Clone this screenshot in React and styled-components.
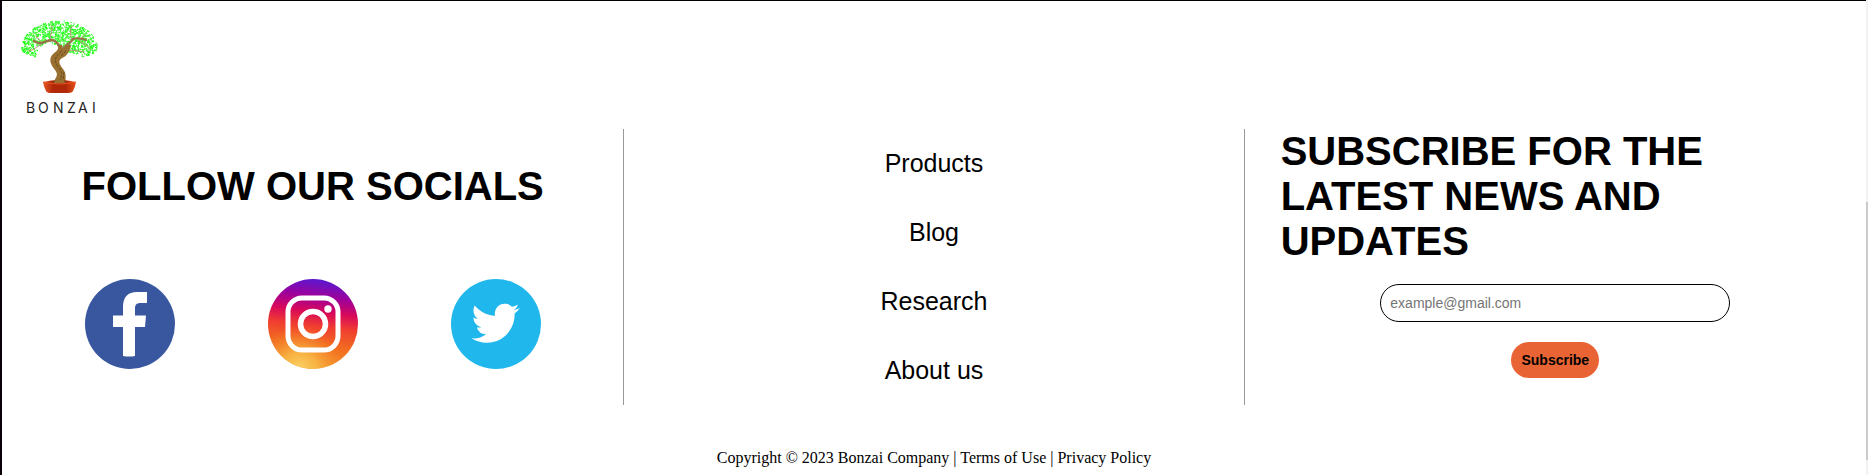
import React from "react";
import styled, { createGlobalStyle } from "styled-components";

const GlobalStyle = createGlobalStyle`
  * { box-sizing: border-box; }
  body { margin: 0; background: #fff; color: #000; }
`;

const Page = styled.div`
  display: flex;
  min-height: 100vh;
`;

const Footer = styled.footer`
  flex: 1;
  border-top: 1px solid #000;
  border-left: 2px solid #0c0008;
`;

const ScrollTrack = styled.div`
  width: 2px;
  padding: 202px 0 15px;
  display: flex;
  background: #f1f1f1;
`;

const ScrollThumb = styled.div`
  flex: 1;
  background: #cbcbcb;
`;

const LogoLink = styled.a`
  display: block;
  width: 100px;
  height: 128px;
  svg { display: block; }
`;

const Columns = styled.div`
  display: grid;
  grid-template-columns: repeat(3, minmax(0, 1fr));
  font-family: Arial, "Liberation Sans", sans-serif;
`;

const Column = styled.section`
  display: flex;
  flex-direction: column;
  align-items: center;
  border: solid #999;
  border-width: ${(p) => (p.$ruled ? "0 1px" : "0")};
  padding: ${(p) => p.$padding || "0"};
`;

const Heading = styled.h2`
  margin: 0;
  font-size: 40px;
  line-height: 45px;
  font-weight: 700;
`;

const Socials = styled.div`
  display: flex;
  justify-content: center;
  gap: 93px;
  margin-top: 70px;
`;

const SocialLink = styled.a`
  display: block;
  width: 90px;
  height: 90px;
  svg { display: block; }
`;

const NavLink = styled.a`
  padding: 20px;
  font-size: 25px;
  line-height: 29px;
  color: #000;
  text-decoration: none;
`;

const Form = styled.form`
  display: flex;
  flex-direction: column;
  align-items: center;
  gap: 20px;
  margin-top: 20px;
`;

const EmailInput = styled.input`
  width: 350px;
  height: 38px;
  padding: 0 9px;
  border: 1px solid #000;
  border-radius: 20px;
  background: #fff;
  font: 14px Arial, "Liberation Sans", sans-serif;
  &::placeholder { color: #757575; }
`;

const SubscribeButton = styled.button`
  height: 36px;
  padding: 0 10px;
  border: none;
  border-radius: 20px;
  background: #e86434;
  color: #000;
  font: 700 14px Arial, "Liberation Sans", sans-serif;
`;

const Legal = styled.p`
  margin: 44px 0 0;
  text-align: center;
  font-family: "Times New Roman", "Liberation Serif", serif;
  font-size: 16px;
  line-height: 18px;
  a { color: inherit; text-decoration: none; }
`;

/* Scatter leaves inside the crown: an arch of foliage open around the trunk. */
const leaves = (() => {
  const out = [];
  let seed = 7;
  const rand = () => {
    seed = (seed * 16807) % 2147483647;
    return seed / 2147483647;
  };
  const inside = (x, y, cx, cy, rx, ry) => ((x - cx) / rx) ** 2 + ((y - cy) / ry) ** 2 < 1;
  while (out.length < 900) {
    const x = 20 + rand() * 75;
    const y = 20 + rand() * 37;
    const crown = inside(x, y, 57.5, 48, 38, y < 48 ? 28 : 10);
    const hollow = inside(x, y, 48, 55, 14, 13) || inside(x, y, 68, 59, 13, 7);
    if (crown && !hollow) out.push([x, y, rand() * 180, rand()]);
  }
  return out;
})();

function Logo() {
  return (
    <svg width="100" height="128" viewBox="0 0 100 128" role="img" aria-label="Bonzai">
      <defs>
        <linearGradient id="pot" x1="0" x2="1" y1="0" y2="0">
          <stop offset="0" stopColor="#e85a24" />
          <stop offset="0.3" stopColor="#b02808" />
          <stop offset="0.7" stopColor="#b02808" />
          <stop offset="1" stopColor="#e8501a" />
        </linearGradient>
      </defs>
      <g>
        {leaves.map(([x, y, r, c], i) => (
          <ellipse
            key={i}
            cx={x}
            cy={y}
            rx="1.1"
            ry="0.55"
            fill={c > 0.4 ? "#1cff14" : "#55f548"}
            transform={`rotate(${r} ${x} ${y})`}
          />
        ))}
      </g>
      <g fill="none" strokeLinecap="round" strokeLinejoin="round">
        <path
          d="M42 42C36 44 33 49 27 50M49 39C47 33 51 31 50 25M39 41L34 35M70 40C69 34 67 32 70 25M76 38C80 43 85 43 88 48M63 50C69 48 74 50 82 51M78 38L83 34"
          stroke="#b58f74"
          strokeWidth="1"
        />
        <path d="M59 51C58 44 54 39 49 39C43 40 40 43 36 42L32 40" stroke="#99704a" strokeWidth="2.4" />
        <path d="M60 50C62 43 68 44 71 38C75 36 80 38 84 39" stroke="#99704a" strokeWidth="2.2" />
      </g>
      <path
        d="M56 44L60 44L61 48L67 43L69 45C67 51 65 55 60 57C55 60 58 64 61 68C65 73 63 77 64 82L51 82C54 76 57 74 53 69C48 63 46 57 52 52C55 50 57 48 56 44Z"
        fill="#99702f"
      />
      <path d="M60 50C52 56 52 60 56 66C61 71 60 75 58 79M64 50L59 55M62 71L61 79" fill="none" stroke="#5f431f" strokeWidth="0.8" strokeDasharray="3 1" />
      <path d="M41 81Q57 77 74 81Q73 87 71 90Q70 92 65 92H49Q45 92 44 90Q42 87 41 81Z" fill="url(#pot)" />
      <path d="M50 81Q57 77 65 81Q57 84 50 81Z" fill="#60401c" />
      <path d="M41 81Q57 85 74 81" fill="none" stroke="#ef5a24" strokeWidth="0.9" />
      <path d="M53 79L62 79L63 82H52Z" fill="#99702f" />
      <text x="24 36 51 65 76 90" y="112" fontFamily="Inter, sans-serif" fontSize="14" fill="#222">
        BONZAI
      </text>
    </svg>
  );
}

function FacebookIcon() {
  return (
    <svg width="90" height="90" viewBox="0 0 90 90" aria-hidden="true">
      <circle cx="45" cy="45" r="45" fill="#39579f" />
      <path d="M38 77V48H28V36.500H38V28C38 18 43 13 52 13H62V24H56C51 24 50 26 50 30V36.500H61L60 48H50V77Q44 78 38 77Z" fill="#fff" />
    </svg>
  );
}

function InstagramIcon() {
  return (
    <svg width="90" height="90" viewBox="0 0 90 90" aria-hidden="true">
      <defs>
        <linearGradient id="ig-base" x1="0.56" y1="0" x2="0.44" y2="1">
          <stop offset="0" stopColor="#5a18d0" />
          <stop offset="0.2" stopColor="#a00098" />
          <stop offset="0.36" stopColor="#d8085a" />
          <stop offset="0.52" stopColor="#f03e30" />
          <stop offset="0.72" stopColor="#f26a20" />
          <stop offset="1" stopColor="#f59a2c" />
        </linearGradient>
        <radialGradient id="ig-glow" cx="0.35" cy="1" r="0.48">
          <stop offset="0" stopColor="#fad266" />
          <stop offset="0.4" stopColor="#f8bc48" stopOpacity="0.8" />
          <stop offset="1" stopColor="#f58a28" stopOpacity="0" />
        </radialGradient>
      </defs>
      <circle cx="45" cy="45" r="45" fill="url(#ig-base)" />
      <circle cx="45" cy="45" r="45" fill="url(#ig-glow)" />
      <g fill="none" stroke="#fff" strokeWidth="5">
        <rect x="20" y="19" width="50" height="52" rx="14" />
        <circle cx="45" cy="45" r="12.500" strokeWidth="5.500" />
      </g>
      <circle cx="60" cy="30" r="3.700" fill="#fff" />
    </svg>
  );
}

function TwitterIcon() {
  return (
    <svg width="90" height="90" viewBox="0 0 90 90" aria-hidden="true">
      <circle cx="45" cy="45" r="45" fill="#1fb7ec" />
      <path
        transform="translate(20.500 20.200) scale(2)"
        d="M23.953 4.570a10 10 0 01-2.825.775 4.958 4.958 0 002.163-2.723c-.951.555-2.005.959-3.127 1.184a4.920 4.920 0 00-8.384 4.482C7.690 8.095 4.067 6.130 1.640 3.162a4.822 4.822 0 00-.666 2.475c0 1.710.870 3.213 2.188 4.096a4.904 4.904 0 01-2.228-.616v.060a4.923 4.923 0 003.946 4.827 4.996 4.996 0 01-2.212.085 4.936 4.936 0 004.604 3.417 9.867 9.867 0 01-6.102 2.105c-.390 0-.779-.023-1.170-.067a13.995 13.995 0 007.557 2.209c9.053 0 13.998-7.496 13.998-13.985 0-.210 0-.420-.015-.630A9.935 9.935 0 0024 4.590z"
        fill="#fff"
      />
    </svg>
  );
}

const socials = [
  { name: "Facebook", Icon: FacebookIcon },
  { name: "Instagram", Icon: InstagramIcon },
  { name: "Twitter", Icon: TwitterIcon },
];

const links = ["Products", "Blog", "Research", "About us"];

export default function App() {
  return (
    <Page>
      <GlobalStyle />
      <Footer>
        <LogoLink href="#home">
          <Logo />
        </LogoLink>
        <Columns>
          <Column $padding="35px 0 0">
            <Heading>FOLLOW OUR SOCIALS</Heading>
            <Socials>
              {socials.map(({ name, Icon }) => (
                <SocialLink key={name} href={`#${name.toLowerCase()}`} aria-label={name}>
                  <Icon />
                </SocialLink>
              ))}
            </Socials>
          </Column>
          <Column as="nav" $ruled>
            {links.map((label) => (
              <NavLink key={label} href="#">
                {label}
              </NavLink>
            ))}
          </Column>
          <Column $padding="0 36px">
            <Heading>SUBSCRIBE FOR THE LATEST NEWS AND UPDATES</Heading>
            <Form onSubmit={(e) => e.preventDefault()}>
              <EmailInput type="email" aria-label="Email address" placeholder="example@gmail.com" />
              <SubscribeButton type="submit">Subscribe</SubscribeButton>
            </Form>
          </Column>
        </Columns>
        <Legal>
          Copyright © 2023 Bonzai Company | <a href="#terms">Terms of Use</a> |{" "}
          <a href="#privacy">Privacy Policy</a>
        </Legal>
      </Footer>
      <ScrollTrack aria-hidden="true">
        <ScrollThumb />
      </ScrollTrack>
    </Page>
  );
}
